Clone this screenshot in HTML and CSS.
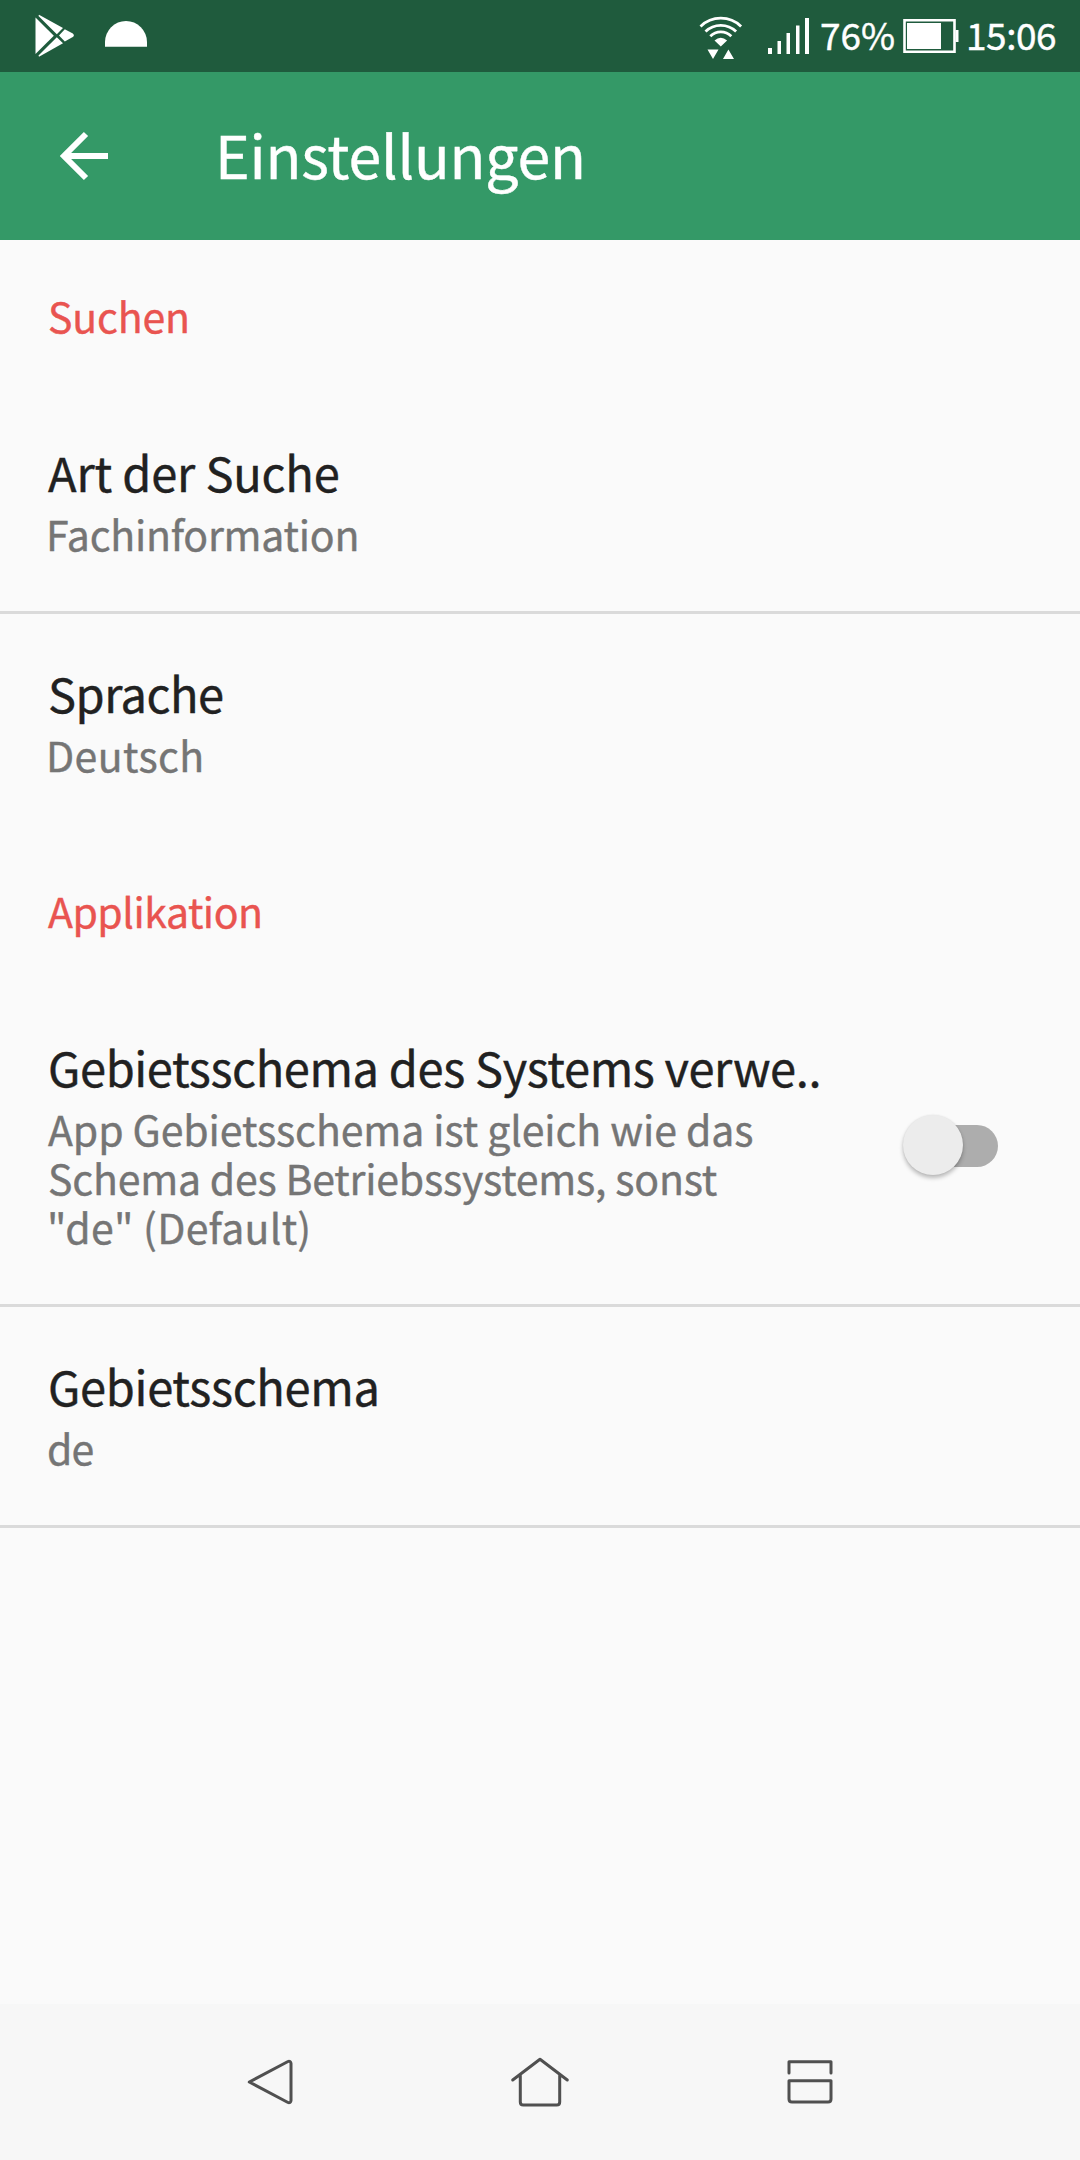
FILE: index.html
```html
<!DOCTYPE html>
<html lang="de">
<head>
<meta charset="utf-8">
<title>Einstellungen</title>
<link rel="stylesheet" href="styles.css">
</head>
<body>
<div class="screen">
  <div class="status-bar">
    <svg class="play-icon" width="40" height="44" viewBox="0 0 40 44" fill="#fff">
      <path d="M.5 3.5 18.800 21.800.5 40z"/>
      <path d="M4 .8 28 14l-6.200 6.200L3.500 2z"/>
      <path d="M29.800 15.300l8 4.200q2.200 1.800 0 3.600l-8 4.400-5.800-5.900z"/>
      <path d="M21.800 23.300 28 29.300 4 42.700l-.5-1.200z"/>
    </svg>
    <svg class="dome-icon" width="43" height="27" viewBox="0 0 43 27" fill="#fff">
      <path d="M0 25.700V21a21 21 0 0 1 42 0v4.700z"/>
    </svg>
    <svg class="wifi-icon" width="44" height="46" viewBox="0 0 44 46">
      <g fill="none" stroke="#fff" stroke-width="2.800">
        <path d="M1.500 11.500a29 29 0 0 1 40.600 0"/>
        <path d="M6.500 16.600a22 22 0 0 1 30.600 0"/>
        <path d="M11.300 21.200a15 15 0 0 1 21 0"/>
      </g>
      <path fill="#fff" d="M15.500 25.500q6.300-5.500 12.600 0L21.800 31.500zM8.500 34.500h11l-5.500 9.500zM24 44h11l-5.600-9.500z"/>
    </svg>
    <svg class="signal-icon" width="42" height="37" viewBox="0 0 42 37" fill="#fff">
      <path d="M0 30h4v6H0zM9.500 23h3.500v13H9.500zM18.500 15h3.500v21h-3.500zM28 7.500h3.500V36H28zM37 0h4v36h-4z"/>
    </svg>
    <span class="battery-level">76%</span>
    <svg class="battery-icon" width="56" height="34" viewBox="0 0 56 34">
      <path fill="none" stroke="#fff" stroke-width="2.600" d="M1.500 1.300h50v31.400h-50z"/>
      <path fill="#fff" d="M4 4h34v26H4zM52.500 11H55.500v12H52.500z"/>
    </svg>
    <span class="clock">15:06</span>
  </div>

  <header class="app-bar">
    <svg class="back-arrow" width="50" height="50" viewBox="0 0 50 50" fill="none" stroke="#fff" stroke-width="6">
      <path d="M48 25H6M26 3 4 25l22 22"/>
    </svg>
    <h1 class="page-title">Einstellungen</h1>
  </header>

  <main class="settings">
    <h2 class="category category-search">Suchen</h2>
    <section class="item divided">
      <h3 class="item-title title-type">Art der Suche</h3>
      <p class="item-summary summary-type">Fachinformation</p>
    </section>
    <section class="item">
      <h3 class="item-title title-language">Sprache</h3>
      <p class="item-summary summary-language">Deutsch</p>
    </section>
    <h2 class="category category-app">Applikation</h2>
    <section class="item divided item-switch">
      <div class="item-text">
        <h3 class="item-title title-system">Gebietsschema des Systems verwe..</h3>
        <p class="item-summary">
          <span class="line line-first">App Gebietsschema ist gleich wie das</span>
          <span class="line line-second">Schema des Betriebssystems, sonst</span>
          <span class="line line-third">"de" (Default)</span>
        </p>
      </div>
      <div class="switch"><span class="thumb"></span></div>
    </section>
    <section class="item divided">
      <h3 class="item-title title-locale">Gebietsschema</h3>
      <p class="item-summary summary-locale">de</p>
    </section>
  </main>

  <nav class="nav-bar">
    <svg width="60" height="52" viewBox="0 0 60 52">
      <path d="M9.300 26 48 5.500q1-.5 2 0 1 .7 1 2V44.500q0 1.300-1 2-1 .5-2 0z"/>
    </svg>
    <svg width="60" height="52" viewBox="0 0 60 52">
      <path d="M2.700 24 30 3.200 57.300 24M10.300 19V46q0 3 3 3h33.400q3 0 3-3V19"/>
    </svg>
    <svg width="60" height="52" viewBox="0 0 60 52">
      <path d="M9 17V5.700h42V17M9 24.700h42V43q0 3-3 3H12q-3 0-3-3z"/>
    </svg>
  </nav>
</div>
</body>
</html>
```
FILE: styles.css
```css
* {
  box-sizing: border-box;
}

body {
  margin: 0;
  font-family: "Noto Sans CJK SC", "Noto Sans", sans-serif;
  font-weight: 400;
  -webkit-text-stroke: 0.4px;
}

h1, h2, h3, p {
  margin: 0;
  font-weight: 400;
  white-space: nowrap;
}

svg {
  display: block;
  flex: none;
}

.screen {
  display: flex;
  flex-direction: column;
  width: 1080px;
  height: 2160px;
  background: #fafafa;
}

/* status bar */
.status-bar {
  display: flex;
  align-items: flex-start;
  height: 72px;
  background: #1f5b3d;
  color: #fff;
  font-size: 37px;
  line-height: 44px;
}

.play-icon {
  margin: 14px 0 0 35px;
}

.dome-icon {
  margin: 21px 0 0 30px;
}

.wifi-icon {
  margin: 15px 0 0 551px;
}

.signal-icon {
  margin: 18px 0 0 25px;
}

.battery-level {
  width: 75px;
  margin: 12px 0 0 10px;
}

.battery-icon {
  margin: 19px 0 0 8px;
}

.clock {
  margin: 12px 0 0 7px;
  letter-spacing: -0.45px;
}

/* app bar */
.app-bar {
  display: flex;
  align-items: center;
  height: 168px;
  background: #349967;
  color: #fff;
}

.back-arrow {
  margin-left: 60px;
}

.page-title {
  margin-left: 105px;
  padding-bottom: 4px;
  font-size: 59px;
  line-height: 72px;
  letter-spacing: -0.23px;
}

/* settings list */
.settings {
  flex: 1;
}

.category {
  height: 153px;
  padding: 51px 48px 0;
  color: #e95450;
  font-size: 41px;
  line-height: 49px;
}

.item {
  padding: 49px 48px 53px;
  border-bottom: 3px solid transparent;
}

.divided {
  border-bottom-color: #dadada;
}

.item-switch {
  display: flex;
  align-items: center;
  justify-content: space-between;
  padding-right: 82px;
}

.item-title {
  color: #212121;
  font-size: 47px;
  line-height: 60px;
}

.item-summary {
  margin-top: 7px;
  color: #757575;
  font-size: 41px;
  line-height: 49px;
}

.line {
  display: block;
}

.category-search { letter-spacing: -0.16px; }
.category-app { letter-spacing: -0.49px; }
.title-type { letter-spacing: -0.2px; }
.title-language { letter-spacing: -0.5px; }
.title-system { letter-spacing: -0.38px; }
.title-locale { letter-spacing: -0.31px; }
.summary-type { letter-spacing: -0.25px; text-indent: -2px; }
.summary-language { letter-spacing: 0.4px; text-indent: -2px; }
.summary-locale { letter-spacing: -1px; text-indent: -1px; }
.line-first { letter-spacing: -0.09px; }
.line-second { letter-spacing: -0.2px; }
.line-third { letter-spacing: 0.25px; text-indent: -1px; }

.switch {
  display: flex;
  align-items: center;
  width: 90px;
  height: 42px;
  margin-top: 4px;
  border-radius: 21px;
  background: #adadad;
}

.thumb {
  flex: none;
  width: 60px;
  height: 60px;
  margin: -2px 0 0 -5px;
  border-radius: 50%;
  background: #ececec;
  box-shadow: 0 3px 4px rgba(0, 0, 0, 0.26), 0 0 2px rgba(0, 0, 0, 0.08);
}

/* navigation bar */
.nav-bar {
  display: flex;
  justify-content: center;
  gap: 210px;
  height: 156px;
  padding-top: 52px;
  background: #f7f7f7;
}

.nav-bar path {
  fill: none;
  stroke: #505050;
  stroke-width: 3;
  stroke-linejoin: round;
  stroke-linecap: round;
}
```
